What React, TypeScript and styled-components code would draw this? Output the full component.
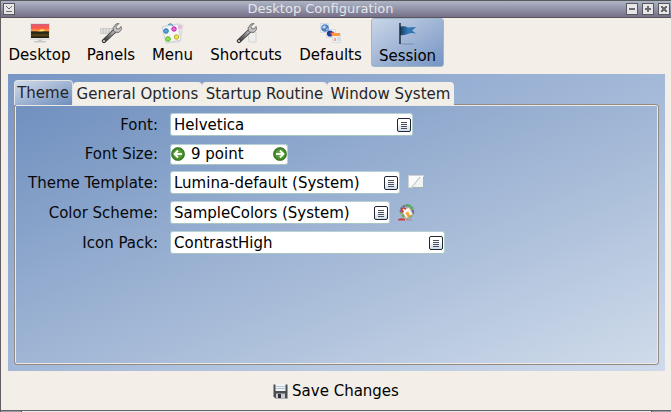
import React from 'react';
import styled, { createGlobalStyle } from 'styled-components';

const Global = createGlobalStyle`
  * { box-sizing: border-box; }
  body { margin: 0; overflow: hidden; font: 15px/18px "DejaVu Sans", sans-serif; color: #101014; }
  svg { display: block; flex: none; }
`;
const Window = styled.div`
  width: 671px; height: 412px; display: flex; flex-direction: column;
  background: #f3eee7; border-left: 1px solid #605e63;
`;
const TitleBar = styled.header`
  height: 18px; display: flex; align-items: center; padding: 0 1px 0 2px;
  border-top: 1px solid #59585e; border-bottom: 1px solid #59545f;
  background: linear-gradient(#aeb5c5, #9093a9 50%, #766f88);
`;
const Title = styled.h1`
  flex: 1; margin: 0; text-align: center;
  font: 13px/16px "DejaVu Sans", sans-serif; color: #e6e6ea;
`;
const WindowButton = styled.button`
  width: 12px; height: 12px; padding: 0; border: 1px solid #59585e; background: #e7e7e7;
`;
const WindowButtons = styled.div`display: flex; gap: 4px;`;
const Text = styled.span`white-space: nowrap;`;
const Toolbar = styled.nav`display: flex; height: 56px;`;
const Tool = styled.button<{ $width: number; $active?: boolean }>`
  width: ${p => p.$width}px; height: 49px; padding: ${p => (p.$active ? 4 : 3)}px 0 0;
  margin-left: ${p => (p.$active ? 1 : 0)}px;
  display: flex; flex-direction: column; align-items: center;
  border: 1px solid ${p => (p.$active ? '#9eb9c6' : 'transparent')}; border-radius: 3px;
  background: ${p => (p.$active ? 'linear-gradient(to top left, #7594c3, #cad6e7)' : 'transparent')};
  font: inherit; color: #000;
`;
const ToolIcon = styled.span<{ $raised?: boolean }>`
  height: 24px; display: flex; align-items: flex-start; padding-top: ${p => (p.$raised ? 0 : 1)}px;
`;
const Content = styled.main`
  margin: 0 6px 0 7px; height: 297px; padding: 6px;
  background: linear-gradient(to bottom right, #7796c4, #cfdbec);
`;
const Tabs = styled.div`display: flex; align-items: flex-end; height: 25px;`;
const Tab = styled.button<{ $width: number; $active?: boolean }>`
  width: ${p => p.$width}px; height: ${p => (p.$active ? 25 : 23)}px; padding: 3px 0 0;
  padding-right: ${p => (p.$active ? 1 : 0)}px;
  display: flex; justify-content: center;
  border: 0 solid #e5e5e5; border-width: ${p => (p.$active ? '1px 1px 0' : '0')};
  border-radius: 4px 4px 0 0; font: inherit; color: #252529;
  background: ${p => (p.$active ? 'linear-gradient(to bottom right, #d3dce9, #6e8dbd)' : '#f2eee8')};
`;
const Page = styled.section`
  height: 261px; margin-top: -1px; border: 1px solid #938a84; border-radius: 3px;
  box-shadow: inset 0 0 0 1px #edeae6; padding: 8px 0 0 11px;
  background: linear-gradient(to bottom right, #7090bf, #cfdbea);
`;
const Row = styled.div<{ $height: number }>`
  display: grid; grid-template-columns: 132px auto auto; column-gap: 12px;
  height: ${p => p.$height}px; justify-content: start; align-items: start;
`;
const Label = styled.label<{ $height?: number }>`
  display: flex; justify-content: flex-end; height: ${p => p.$height ?? 23}px; align-items: center; color: #08080a;
`;
const Field = styled.div<{ $width: number }>`
  width: ${p => p.$width}px; height: 23px; display: flex; align-items: center;
  justify-content: space-between; padding: 0 1px 0 3px; border: 1px solid #b7d1d5;
  border-color: #b7d1d5 #b7d1d5 #a8c5c2 #a9c7d4; border-radius: 3px; background: #fff; color: #000;
`;
const Spinner = styled(Field)`
  height: 21px; padding: 0 0 1px; margin-top: 1px; justify-content: flex-start; gap: 6px;
  svg:last-child { margin-left: auto; }
`;
const MenuButton = styled.button`
  width: 14px; height: 14px; border: 1px solid #202630; border-radius: 2px; padding: 2px 0 0 3px;
  background: linear-gradient(#fff 35%, #cfdded);
`;
const IconSlot = styled.div`padding-top: 3px; margin-left: -4px;`;
const Footer = styled.footer`
  height: 39px; display: flex; align-items: center; justify-content: center; padding-top: 1px;
`;
const Save = styled.button`
  display: flex; gap: 4px; align-items: center; padding: 0; border: 0; background: none; font: inherit; color: #000;
`;
const BottomEdge = styled.div`
  height: 2px; border-top: 1px solid #66646a; display: flex; justify-content: space-between; background: #e9e7e8;
`;
const Grip = styled.i<{ $right?: boolean }>`
  width: ${p => (p.$right ? 20 : 21)}px; height: 1px; background: #9b9aa2;
  border: 0 solid #55545a; border-width: ${p => (p.$right ? '0 0 0 1px' : '0 1px 0 0')};
`;

const Glyph = ({ d, stroke = 2 }: { d: string; stroke?: number }) => (
  <svg width="10" height="10" viewBox="0 0 10 10" shapeRendering="crispEdges">
    <path d={d} fill="none" stroke="#6c6b6d" strokeWidth={stroke} />
  </svg>
);
const MonitorIcon = () => (
  <svg width="20" height="20" viewBox="0 0 20 20">
    <defs><linearGradient id="sunset" x2="0" y2="1"><stop stopColor="#d85c80" /><stop offset=".3" stopColor="#ff5a44" /><stop offset=".52" stopColor="#ffa64a" /><stop offset=".56" stopColor="#171b13" /><stop offset=".8" stopColor="#5c4517" /><stop offset="1" stopColor="#131714" /></linearGradient></defs>
    <path d="M.25 0h19.5v16.5H.25z" fill="#e2e3e2" stroke="#d3d4d4" strokeWidth=".5" />
    <path d="M1 1h18v14H1z" fill="url(#sunset)" />
    <path d="M1 8.5h6l2 .7 4-.7h6v2H1z" fill="#20291a" />
    <ellipse cx="12" cy="7.2" rx="2.6" ry="1" fill="#ffe066" />
    <path d="M8 16.5h4V18h4v1.5H4V18h4z" fill="#c8caca" />
  </svg>
);
const WrenchIcon = ({ keyboard }: { keyboard?: boolean }) => (
  <svg width="22" height="21" viewBox="0 0 22 21">
    <defs><linearGradient id="steel" x1="1" x2="0" y2="1"><stop stopColor="#ccc" /><stop offset=".5" stopColor="#777" /><stop offset="1" stopColor="#333" /></linearGradient></defs>
    {keyboard
      ? <><path d="M.5 5.5h16v5H.5z" fill="#e4e4e2" stroke="#ccc" /><path d="M2 7h13M2 9h13" stroke="#bbb" strokeDasharray="2 1" /></>
      : <path d="M13 9h8v10h-7z" fill="#efefed" stroke="#d4d4d1" />}
    <path d="M4 18L15 7.5" stroke="#3c3c3c" strokeWidth="4.3" strokeLinecap="round" />
    <path d="M4 18L15 7.5" stroke="url(#steel)" strokeWidth="2.6" strokeLinecap="round" />
    <path d="M14 9L13 5l3-4 3-.5-3 3 .5 2.2 2.5.3 2-2.6.5 3-2.5 3z" fill="#c5c5c5" stroke="#666" strokeWidth=".9" />
    <circle cx="4" cy="18" r=".9" fill="#f4f4f4" />
  </svg>
);
const MenuIcon = () => (
  <svg width="23" height="21" viewBox="0 0 23 21">
    <path d="M5 2l14-1 3 1-3 17-14 1z" fill="#e6e6ec" stroke="#ddd" />
    <path d="M1 4l16-3 3 16-15 3z" fill="#f5f5f6" stroke="#d2d3d8" />
    <path d="M7 2q3-3 5 1" fill="#83bdda" stroke="#4594c3" />
    <circle cx="19" cy="4" r="2" fill="#edb4e2" />
    <circle cx="5" cy="8" r="2.3" fill="#59a7d8" stroke="#2873b5" />
    <circle cx="13" cy="6" r="2.2" fill="#ef68d5" stroke="#bf24a8" />
    <circle cx="7" cy="16" r="2.3" fill="#91ea4b" stroke="#54b322" />
    <circle cx="15.5" cy="14" r="2.2" fill="#eee45c" stroke="#b7af32" />
  </svg>
);
const DefaultsIcon = () => (
  <svg width="21" height="21" viewBox="0 0 21 21">
    <path d="M.5.5h8v9h-8zM6.5 6.5h9v8h-9z" fill="#f1f3f7" stroke="#d5dbe7" />
    <circle cx="5" cy="5" r="3.8" fill="#4e80bd" /><path d="M2 4l3-2 1 2-2 2zM6 6l2-1-1 3z" fill="#bfd6ef" />
    <circle cx="10" cy="10.5" r="3.1" fill="#173c9c" /><path d="M10 10l4-1.5 1 4-3 1z" fill="#ed4c3f" />
    <path d="M12.5 10.5h8v9h-8z" fill="#eee" stroke="#ddd" /><path d="M12 10h8v3h-8z" fill="#ff9740" />
    <path d="M14 15h2v3h-2z" fill="#eea4a0" /><path d="M17 15h3M17 17h3" stroke="#b6cde5" />
  </svg>
);
const FlagIcon = () => (
  <svg width="18" height="22" viewBox="0 0 18 22">
    <defs><linearGradient id="flag"><stop stopColor="#153d66" /><stop offset=".5" stopColor="#347bb9" /><stop offset="1" stopColor="#2d6ca9" /></linearGradient></defs>
    <ellipse cx="8" cy="21" rx="8" ry=".8" fill="#52698c" opacity=".35" />
    <path d="M1 3.5q5-1 8 1l8-.5-4 3.5 4 3q-5-1-8 .5-3 1.5-8 1z" fill="url(#flag)" />
    <path d="M1 0v21" stroke="#192a38" strokeWidth="1.5" />
  </svg>
);
const Arrow = ({ right }: { right?: boolean }) => (
  <svg width="14" height="14" viewBox="0 0 14 14">
    <defs><radialGradient id="leaf"><stop stopColor="#76b34d" /><stop offset=".6" stopColor="#509b30" /><stop offset="1" stopColor="#347420" /></radialGradient></defs>
    <circle cx="7" cy="7" r="6.6" fill="url(#leaf)" stroke="#376b25" strokeWidth=".6" />
    <path d={right ? 'M3 7h7M7 3.5L10.5 7 7 10.5' : 'M11 7H4M7 3.5L3.5 7 7 10.5'} fill="none" stroke="#f8fff2" strokeWidth="1.9" />
  </svg>
);
const TemplateIcon = () => (
  <svg width="16" height="16" viewBox="0 0 16 16">
    <path d="M.5 1.5h15v12H.5z" fill="#f9faf9" stroke="#ced3d2" />
    <path d="M11 3h4v10H5z" fill="#eef3f4" /><path d="M4 13L12 3M5 13.5h10.5V3" stroke="#98aaa3" strokeWidth=".8" fill="none" />
  </svg>
);
const PaintIcon = () => (
  <svg width="17" height="17" viewBox="0 0 17 17">
    <circle cx="9" cy="7.5" r="6" fill="none" stroke="#74ad4e" strokeWidth="2.4" strokeDasharray="3 1" />
    <path d="M3 8A6 6 0 0 1 7 2" fill="none" stroke="#9852aa" strokeWidth="2.6" strokeDasharray="2 .6" />
    <path d="M8 1.5a6 6 0 0 1 6 3" fill="none" stroke="#45a37a" strokeWidth="2.6" strokeDasharray="2 .6" />
    <path d="M14.8 6v4" stroke="#6b5cc0" strokeWidth="2" />
    <path d="M4 7l7-4 4 7-7 5z" fill="#fbf3e6" stroke="#b98a52" strokeWidth=".6" />
    <path d="M7.5 9l2.5-1.5 2.5 4.5-2.5 1.5z" fill="#eda733" />
    <path d="M3 4l5 0-1 2.5-3 2.5z" fill="#bd3b39" /><path d="M5 5l3 3" stroke="#fff" strokeWidth="1.4" />
    <path d="M0 15.5q3-2 7-.5v1.5H0z" fill="#d03a3a" /><path d="M8 15.8h6" stroke="#b08683" />
  </svg>
);
const SaveIcon = () => (
  <svg width="15" height="15" viewBox="0 0 15 15">
    <path d="M.5.5h14v14h-12l-2-2z" fill="#4b4d53" />
    <path d="M2.5 0h10v7h-10z" fill="#f2f5f7" /><path d="M3 2.5h9M3 4.5h9" stroke="#b8c4cf" />
    <path d="M3 9.5h9v5H3z" fill="#c8c9cc" /><path d="M5 10h3v4H5z" fill="#303136" />
  </svg>
);
const ListButton = () => (
  <MenuButton aria-label="Choose">
    <svg width="7" height="7" viewBox="0 0 7 7" shapeRendering="crispEdges"><path d="M0 .5h6M0 2.5h6M0 4.5h6M0 6.5h6" stroke="#4b4f55" /></svg>
  </MenuButton>
);

const tools = [
  { name: 'Desktop', width: 77, icon: <MonitorIcon /> },
  { name: 'Panels', width: 66, icon: <WrenchIcon keyboard /> },
  { name: 'Menu', width: 57, icon: <MenuIcon /> },
  { name: 'Shortcuts', width: 90, icon: <WrenchIcon /> },
  { name: 'Defaults', width: 79, icon: <DefaultsIcon /> },
  { name: 'Session', width: 73, icon: <FlagIcon />, active: true },
];
const tabs = [
  { name: 'Theme', width: 59 }, { name: 'General Options', width: 129 },
  { name: 'Startup Routine', width: 125 }, { name: 'Window System', width: 127 },
];

export default function App() {
  return (
    <>
      <Global />
      <Window>
        <TitleBar>
          <WindowButton aria-label="Window menu"><Glyph d="M2 2.5h1M7 2.5h1M3 3.5h1M6 3.5h1M4 4.5h2M2 7.5h6" stroke={1} /></WindowButton>
          <Title>Desktop Configuration</Title>
          <WindowButtons>
            <WindowButton aria-label="Minimize"><Glyph d="M2 5h6" /></WindowButton>
            <WindowButton aria-label="Maximize"><Glyph d="M2 5h6M5 2v6" /></WindowButton>
            <WindowButton aria-label="Close"><Glyph d="M2 3h2M6 3h2M3 4h4M3 6h4M2 7h2M6 7h2" /></WindowButton>
          </WindowButtons>
        </TitleBar>
        <Toolbar>
          {tools.map(t => (
            <Tool key={t.name} $width={t.width} $active={t.active}>
              <ToolIcon $raised={t.active}>{t.icon}</ToolIcon><Text>{t.name}</Text>
            </Tool>
          ))}
        </Toolbar>
        <Content>
          <Tabs>{tabs.map((t, i) => <Tab key={t.name} $width={t.width} $active={i === 0}><Text>{t.name}</Text></Tab>)}</Tabs>
          <Page>
            <Row $height={30}><Label>Font:</Label><Field $width={243}><Text>Helvetica</Text><ListButton /></Field></Row>
            <Row $height={28}><Label $height={21}>Font Size:</Label><Spinner $width={118}><Arrow /><Text>9 point</Text><Arrow right /></Spinner></Row>
            <Row $height={30}><Label>Theme Template:</Label><Field $width={230}><Text>Lumina-default (System)</Text><ListButton /></Field><IconSlot><TemplateIcon /></IconSlot></Row>
            <Row $height={30}><Label>Color Scheme:</Label><Field $width={220}><Text>SampleColors (System)</Text><ListButton /></Field><IconSlot><PaintIcon /></IconSlot></Row>
            <Row $height={30}><Label>Icon Pack:</Label><Field $width={275}><Text>ContrastHigh</Text><ListButton /></Field></Row>
          </Page>
        </Content>
        <Footer><Save><SaveIcon /><Text>Save Changes</Text></Save></Footer>
        <BottomEdge><Grip /><Grip $right /></BottomEdge>
      </Window>
    </>
  );
}
